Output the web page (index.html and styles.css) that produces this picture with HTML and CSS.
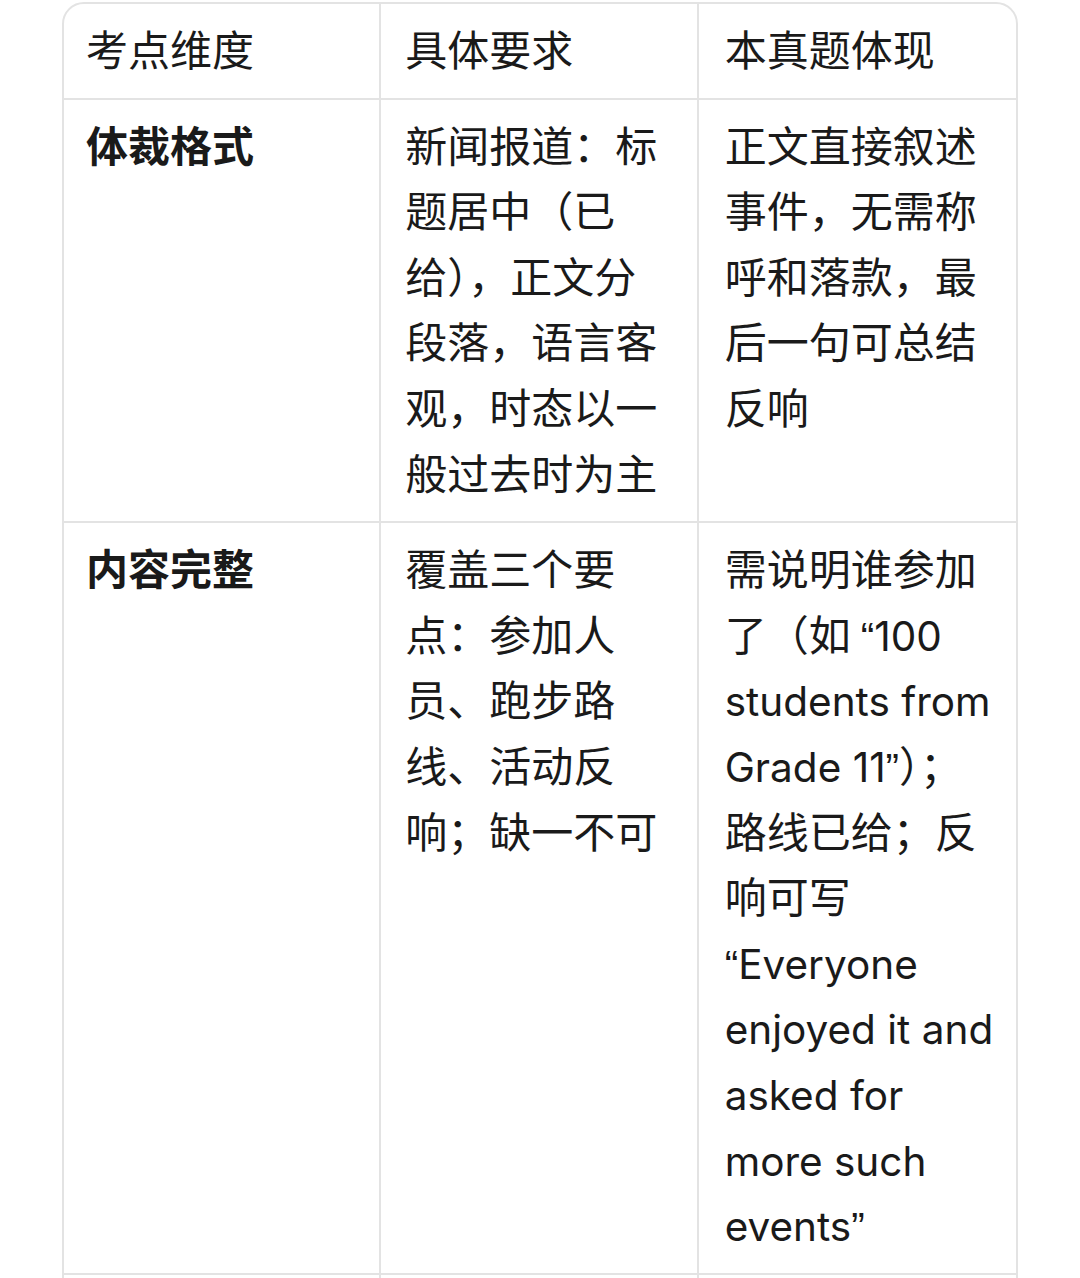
FILE: index.html
```html
<!DOCTYPE html>
<html lang="zh-CN">
<head>
<meta charset="utf-8">
<title>考点维度</title>
<link rel="stylesheet" href="styles.css">
</head>
<body>
<div class="table-wrap">
  <table class="grid">
    <thead>
      <tr>
        <th class="first">考点维度</th>
        <th>具体要求</th>
        <th class="last">本真题体现</th>
      </tr>
    </thead>
    <tbody>
      <tr>
        <td class="first dim">体裁格式</td>
        <td>新闻报道：标题居中（已给），正文分段落，语言客观，时态以一般过去时为主</td>
        <td class="last">正文直接叙述事件，无需称呼和落款，最后一句可总结反响</td>
      </tr>
      <tr>
        <td class="first dim">内容完整</td>
        <td>覆盖三个要点：参加人员、跑步路线、活动反响；缺一不可</td>
        <td class="last">需说明谁参加了（如<span class="q gap">“</span><span class="en">100 students from Grade 11</span><span class="q">”</span>）；路线已给；反响可写 <span class="q">“</span><span class="en">Everyone enjoyed it and asked for more such events</span><span class="q">”</span></td>
      </tr>
      <tr class="cut">
        <td class="first dim"></td>
        <td></td>
        <td class="last"></td>
      </tr>
    </tbody>
  </table>
</div>
</body>
</html>
```

FILE: styles.css
```css
html, body {
  margin: 0;
  padding: 0;
  background: #ffffff;
}

body {
  font-family: Inter, "Noto Sans CJK SC", sans-serif;
  color: #1a1a1a;
}

.table-wrap {
  margin: 2px 0 0 62px;
  width: 956px;
  border: 2px solid #e3e3e3;
  border-radius: 22px;
  overflow: hidden;
  box-sizing: border-box;
}

.grid {
  width: 100%;
  border-collapse: separate;
  border-spacing: 0;
  table-layout: fixed;
}

.grid th,
.grid td {
  font-size: 42px;
  line-height: 65.6px;
  font-weight: 400;
  text-align: left;
  vertical-align: top;
  padding: 14px 24px 14px 24px;
  border-right: 2px solid #e3e3e3;
  border-bottom: 2px solid #e3e3e3;
  word-break: normal;
}

.grid .first {
  padding-left: 22px;
}

.grid .last {
  border-right: none;
  padding-left: 26px;
  padding-right: 12px;
}

.grid td.dim {
  font-weight: 700;
}

.en {
  font-size: 40.5px;
  line-height: 1;
}

.q {
  font-family: "Liberation Sans", sans-serif;
  font-size: 40.5px;
  line-height: 1;
}

.gap {
  margin-left: 10px;
}

.cut td {
  height: 80px;
}
```
